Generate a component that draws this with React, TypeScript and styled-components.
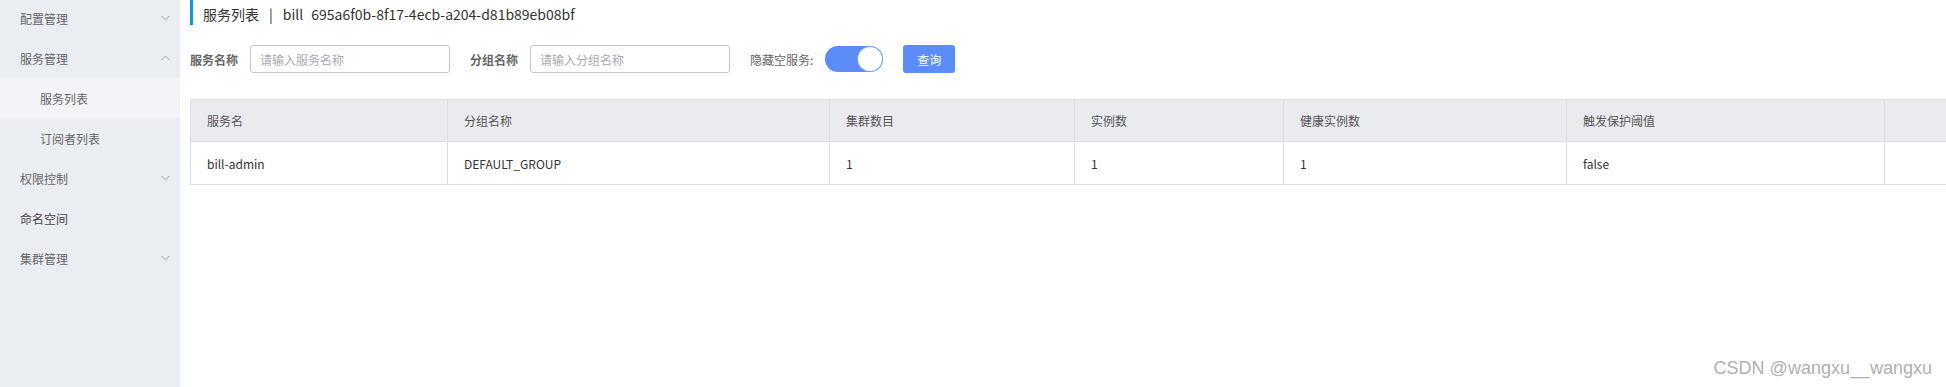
import React from "react";
import styled, { createGlobalStyle } from "styled-components";

const Global = createGlobalStyle`
  html, body { margin: 0; padding: 0; background: #fff; }
  body {
    width: 1946px; height: 387px; overflow: hidden;
    font-family: "Noto Sans CJK SC", "Noto Sans", sans-serif;
  }
  * { box-sizing: border-box; }
`;

const Page = styled.div`
  position: relative;
  display: flex;
  width: 1946px;
  height: 387px;
  overflow: hidden;
`;

const Sidebar = styled.nav`
  width: 180px;
  flex: none;
  height: 387px;
  background: #eaedf1;
`;

const MenuList = styled.div`
  display: flex;
  flex-direction: column;
  margin-top: -2px;
`;

const MenuItem = styled.div<{ $sub?: boolean; $active?: boolean; $dark?: boolean }>`
  height: 40px;
  display: flex;
  align-items: center;
  justify-content: space-between;
  padding-left: ${(p) => (p.$sub ? "40px" : "20px")};
  padding-right: 10px;
  font-size: 12px;
  color: ${(p) => (p.$dark ? "#444" : "#666")};
  background: ${(p) => (p.$active ? "#f3f4f7" : "transparent")};
`;

const Chevron = ({ up }: { up?: boolean }) => (
  <svg width="9" height="6" viewBox="0 0 9 6">
    <polyline
      points={up ? "0.5,5 4.5,1 8.5,5" : "0.5,1 4.5,5 8.5,1"}
      fill="none"
      stroke="#a0a4aa"
      strokeWidth="1"
    />
  </svg>
);

const Main = styled.main`
  flex: 1;
  min-width: 0;
  padding-left: 10px;
  overflow: hidden;
`;

const TitleBar = styled.div`
  height: 25px;
  border-left: 3px solid #1296db;
  padding-left: 10px;
  padding-top: 3px;
  display: flex;
  align-items: center;
  font-size: 14px;
  color: #333;
  white-space: nowrap;
`;

const Sep = styled.span`
  margin: 0 10px;
`;

const Gap = styled.span`
  display: inline-block;
  width: 8px;
`;

const FilterRow = styled.div`
  margin-top: 20px;
  display: flex;
  align-items: center;
  height: 28px;
`;

const Field = styled.div<{ $first?: boolean }>`
  display: flex;
  align-items: center;
  margin-left: ${(p) => (p.$first ? "0" : "20px")};
`;

const Label = styled.label<{ $bold?: boolean }>`
  font-size: 12px;
  color: #666;
  font-weight: ${(p) => (p.$bold ? 700 : 400)};
  margin-right: 12px;
  white-space: nowrap;
`;

const Input = styled.input`
  width: 200px;
  height: 28px;
  border: 1px solid #c4c6cc;
  border-radius: 3px;
  padding: 0 9px;
  font-size: 12px;
  font-family: inherit;
  outline: none;
  &::placeholder { color: #a9abb0; }
`;

const Switch = styled.div`
  width: 58px;
  height: 26px;
  border-radius: 13px;
  background: #5b8cf8;
  display: flex;
  align-items: center;
  justify-content: flex-end;
  padding-right: 1px;
`;

const Knob = styled.div`
  width: 24px;
  height: 24px;
  border-radius: 50%;
  background: #fff;
  box-shadow: 0 0 0 1px #7ea4fa;
`;

const Button = styled.button`
  margin-left: 20px;
  width: 52px;
  height: 28px;
  border: none;
  border-radius: 3px;
  background: #5b8cf8;
  color: #fff;
  font-size: 12px;
  font-family: inherit;
  padding: 0;
`;

const Table = styled.table`
  margin-top: 26px;
  border-collapse: collapse;
  table-layout: fixed;
  width: 1800px;
  font-size: 12px;
`;

const Th = styled.th`
  height: 42px;
  background: #e9ebef;
  border: 1px solid #dcdee2;
  text-align: left;
  font-weight: 400;
  color: #555;
  padding: 0 0 0 16px;
`;

const Td = styled.td`
  height: 43px;
  border: 1px solid #dcdee2;
  color: #333;
  padding: 0 0 0 16px;
`;

const Watermark = styled.div`
  position: absolute;
  right: 14px;
  bottom: 8px;
  font-family: "Liberation Sans", Arial, sans-serif;
  font-size: 18px;
  color: #b0b0b0;
  text-shadow: 0 0 1px #fff;
`;

const cols = [257, 382, 245, 209, 283, 318, 106];
const headers = ["服务名", "分组名称", "集群数目", "实例数", "健康实例数", "触发保护阈值", ""];
const row = ["bill-admin", "DEFAULT_GROUP", "1", "1", "1", "false", ""];

export default function App() {
  return (
    <Page>
      <Global />
      <Sidebar>
        <MenuList>
          <MenuItem>配置管理<Chevron /></MenuItem>
          <MenuItem>服务管理<Chevron up /></MenuItem>
          <MenuItem $sub $active>服务列表</MenuItem>
          <MenuItem $sub>订阅者列表</MenuItem>
          <MenuItem>权限控制<Chevron /></MenuItem>
          <MenuItem $dark>命名空间</MenuItem>
          <MenuItem>集群管理<Chevron /></MenuItem>
        </MenuList>
      </Sidebar>
      <Main>
        <TitleBar>
          服务列表<Sep>|</Sep>bill<Gap />695a6f0b-8f17-4ecb-a204-d81b89eb08bf
        </TitleBar>
        <FilterRow>
          <Field $first>
            <Label $bold>服务名称</Label>
            <Input placeholder="请输入服务名称" />
          </Field>
          <Field>
            <Label $bold>分组名称</Label>
            <Input placeholder="请输入分组名称" />
          </Field>
          <Field>
            <Label>隐藏空服务:</Label>
            <Switch><Knob /></Switch>
          </Field>
          <Button>查询</Button>
        </FilterRow>
        <Table>
          <colgroup>
            {cols.map((w, i) => (
              <col key={i} style={{ width: w }} />
            ))}
          </colgroup>
          <thead>
            <tr>{headers.map((h, i) => <Th key={i}>{h}</Th>)}</tr>
          </thead>
          <tbody>
            <tr>{row.map((c, i) => <Td key={i}>{c}</Td>)}</tr>
          </tbody>
        </Table>
      </Main>
      <Watermark>CSDN @wangxu__wangxu</Watermark>
    </Page>
  );
}
